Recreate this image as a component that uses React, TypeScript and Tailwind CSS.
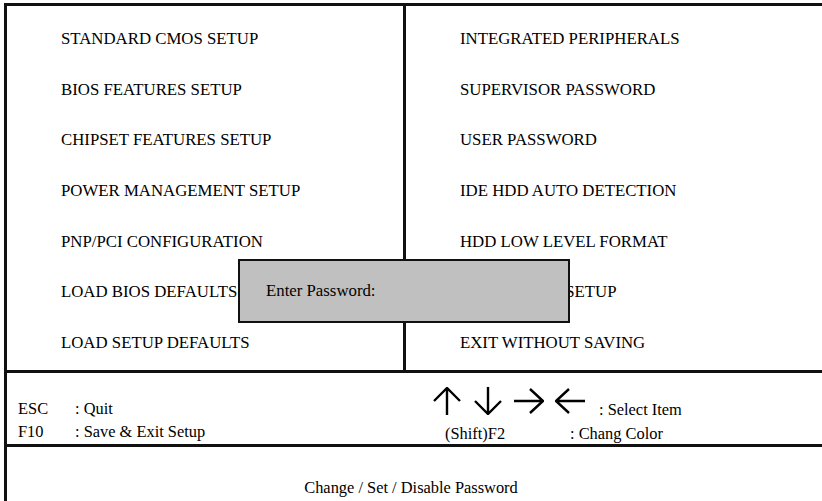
import React from 'react';

const LEFT = [
  'STANDARD CMOS SETUP',
  'BIOS FEATURES SETUP',
  'CHIPSET FEATURES SETUP',
  'POWER MANAGEMENT SETUP',
  'PNP/PCI CONFIGURATION',
  'LOAD BIOS DEFAULTS',
  'LOAD SETUP DEFAULTS',
];

const RIGHT = [
  'INTEGRATED PERIPHERALS',
  'SUPERVISOR PASSWORD',
  'USER PASSWORD',
  'IDE HDD AUTO DETECTION',
  'HDD LOW LEVEL FORMAT',
  'SAVE & EXIT SETUP',
  'EXIT WITHOUT SAVING',
];

function Arrow({ dir }: { dir: 'up' | 'down' | 'right' | 'left' }) {
  const paths = {
    up: 'M15 1 L15 28 M2 14 L15 1 L28 14',
    down: 'M15 0 L15 27 M2 14 L15 27 L28 14',
    right: 'M0 14 L29 14 M16 2 L29 14 L16 26',
    left: 'M1 14 L30 14 M14 2 L1 14 L14 26',
  };
  return (
    <svg width="30" height="28" viewBox="0 0 30 28" className="flex-shrink-0">
      <path d={paths[dir]} fill="none" stroke="#000" strokeWidth="2.4" />
    </svg>
  );
}

function MenuColumn({ items }: { items: string[] }) {
  return (
    <div className="flex flex-col pt-[8px] pl-[54px]">
      {items.map((label) => (
        <div key={label} className="h-[50.7px] flex items-center whitespace-nowrap">
          {label}
        </div>
      ))}
    </div>
  );
}

export default function App() {
  return (
    <div
      className="relative w-[822px] h-[501px] overflow-hidden bg-white text-black text-[16.8px] leading-none pt-[3px] pl-[4px]"
      style={{ fontFamily: '"Liberation Serif", "Times New Roman", serif' }}
    >
      <div className="h-full border-t-[3px] border-l-[3px] border-[#111] flex flex-col">
        {/* Menu */}
        <div className="h-[367px] flex border-b-[3px] border-[#111]">
          <div className="w-[399px] border-r-[3px] border-[#111] flex-shrink-0">
            <MenuColumn items={LEFT} />
          </div>
          <div className="flex-1">
            <MenuColumn items={RIGHT} />
          </div>
        </div>

        {/* Key help */}
        <div className="h-[74px] flex border-b-[3px] border-[#111]">
          <div className="w-[425px] flex-shrink-0 pl-[11px] pt-[25px] text-[16.4px]">
            <div className="flex h-[23px] items-center">
              <span className="w-[57px]">ESC</span>
              <span>: Quit</span>
            </div>
            <div className="flex h-[23px] items-center">
              <span className="w-[57px]">F10</span>
              <span>: Save &amp; Exit Setup</span>
            </div>
          </div>
          <div className="flex-1 pt-[14px] text-[16.4px]">
            <div className="flex items-end">
              <div className="flex gap-[11px]">
                <Arrow dir="up" />
                <Arrow dir="down" />
                <Arrow dir="right" />
                <Arrow dir="left" />
              </div>
              <span className="ml-[14px] mb-[-3px]">: Select Item</span>
            </div>
            <div className="flex h-[23px] items-center pl-[13px] mt-[8px]">
              <span className="w-[125px]">(Shift)F2</span>
              <span>: Chang Color</span>
            </div>
          </div>
        </div>

        {/* Status line */}
        <div className="flex-1 flex justify-center pt-[33px] pr-[7px] text-[16.4px]">
          Change / Set / Disable Password
        </div>
      </div>

      {/* Password dialog */}
      <div className="absolute left-[238px] top-[259px] w-[332px] h-[64px] bg-[#c0c0c0] border-2 border-[#111] flex items-center pl-[26px]">
        Enter Password:
      </div>
    </div>
  );
}
